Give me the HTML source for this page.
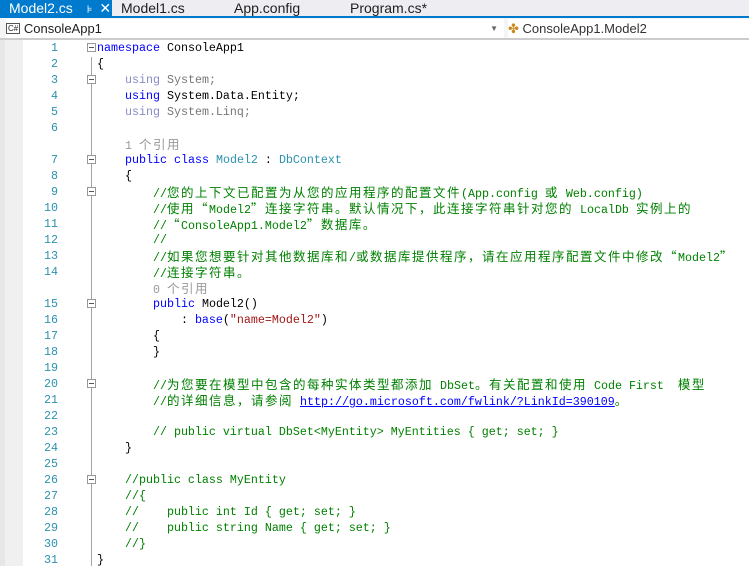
<!DOCTYPE html>
<html><head><meta charset="utf-8"><style>
*{margin:0;padding:0;box-sizing:border-box}
body{width:749px;height:566px;overflow:hidden;background:#fff;position:relative;font-family:"Liberation Sans","Noto Sans CJK SC",sans-serif}
.tabs{position:absolute;left:0;top:0;width:749px;height:17px;background:#eeeef2}
.tab{position:absolute;top:0;height:17px;font-size:14px;line-height:16px;color:#1e1e1e}
.act{left:0;width:112px;background:#007acc;color:#fff;padding-left:9px}
.uline{position:absolute;left:0;top:16px;width:749px;height:2px;background:#007acc}
.bar{position:absolute;left:0;top:18px;width:749px;height:22px;background:#f5f5f5;border-bottom:2px solid #ccc}
.dd{position:absolute;top:1px;height:19px;background:#fff;font-size:13px;line-height:19px;color:#1e1e1e}
.gut1{position:absolute;left:0;top:40px;width:5px;height:526px;background:#e6e7e8}
.gut2{position:absolute;left:5px;top:40px;width:18px;height:526px;background:#f0f0f0}
.code{position:absolute;left:0;top:40px;width:749px;font-family:"Liberation Mono","Noto Sans CJK SC",monospace;font-size:11.67px}
.r{height:16px;line-height:16px;white-space:pre;position:relative}
.n{position:absolute;left:0;width:58px;text-align:right;color:#2b91af}
.t{position:absolute;left:97px}
.c{font-family:"Noto Sans CJK SC",sans-serif;font-size:12.5px;letter-spacing:1.5px}
.k{color:#0000ff}.ty{color:#2b91af}.g{color:#008000}.s{color:#a31515}.d{color:#999}
.du{color:#8a8ac8}.dg{color:#777}
.fold{position:absolute;left:87px;width:9px;height:9px;border:1px solid #999;background:#fff}
.fold:after{content:"";position:absolute;left:1px;top:3px;width:5px;height:1px;background:#555}
.vl{position:absolute;left:91px;top:57px;width:1px;height:509px;background:#a5a5a5}
a{color:#0000ff;text-decoration:underline}
</style></head><body>
<div class="tabs">
<div class="tab act">Model2.cs <span style="margin-left:10px;font-size:11px">⊧</span> <span style="margin-left:3px">✕</span></div>
<div class="tab" style="left:121px">Model1.cs</div>
<div class="tab" style="left:234px">App.config</div>
<div class="tab" style="left:350px">Program.cs*</div>
</div>
<div class="uline"></div>
<div class="bar">
<div class="dd" style="left:6px;width:498px"><span style="display:inline-block;border:1px solid #555;font-size:8px;line-height:9px;padding:0 1px;vertical-align:2px">C#</span> ConsoleApp1<span style="position:absolute;right:6px;font-size:8px;color:#666">▼</span></div>
<div class="dd" style="left:508px;width:241px;color:#333"><span style="color:#c98a1a">✤</span> ConsoleApp1.Model2</div>
</div>
<div class="gut1"></div><div class="gut2"></div>
<div class="vl"></div>
<div class="code">
<div class="r"><span class="n">1</span><span class="fold" style="top:3px"></span><span class="t"><span class="k">namespace</span> ConsoleApp1</span></div>
<div class="r"><span class="n">2</span><span class="t">{</span></div>
<div class="r"><span class="n">3</span><span class="fold" style="top:3px"></span><span class="t">    <span class="du">using</span> <span class="dg">System;</span></span></div>
<div class="r"><span class="n">4</span><span class="t">    <span class="k">using</span> System.Data.Entity;</span></div>
<div class="r"><span class="n">5</span><span class="t">    <span class="du">using</span> <span class="dg">System.Linq;</span></span></div>
<div class="r"><span class="n">6</span><span class="t"></span></div>
<div class="r"><span class="t d">    1 <span class="c">个引用</span></span></div>
<div class="r"><span class="n">7</span><span class="fold" style="top:3px"></span><span class="t">    <span class="k">public</span> <span class="k">class</span> <span class="ty">Model2</span> : <span class="ty">DbContext</span></span></div>
<div class="r"><span class="n">8</span><span class="t">    {</span></div>
<div class="r"><span class="n">9</span><span class="fold" style="top:3px"></span><span class="t g">        //<span class="c">您的上下文已配置为从您的应用程序的配置文件</span>(App.config <span class="c">或</span> Web.config)</span></div>
<div class="r"><span class="n">10</span><span class="t g">        //<span class="c">使用“</span>Model2<span class="c">”连接字符串。默认情况下，此连接字符串针对您的</span> LocalDb <span class="c">实例上的</span></span></div>
<div class="r"><span class="n">11</span><span class="t g">        //<span class="c">“</span>ConsoleApp1.Model2<span class="c">”数据库。</span></span></div>
<div class="r"><span class="n">12</span><span class="t g">        //</span></div>
<div class="r"><span class="n">13</span><span class="t g">        //<span class="c">如果您想要针对其他数据库和</span>/<span class="c">或数据库提供程序，请在应用程序配置文件中修改“</span>Model2<span class="c">”</span></span></div>
<div class="r"><span class="n">14</span><span class="t g">        //<span class="c">连接字符串。</span></span></div>
<div class="r"><span class="t d">        0 <span class="c">个引用</span></span></div>
<div class="r"><span class="n">15</span><span class="fold" style="top:3px"></span><span class="t">        <span class="k">public</span> Model2()</span></div>
<div class="r"><span class="n">16</span><span class="t">            : <span class="k">base</span>(<span class="s">"name=Model2"</span>)</span></div>
<div class="r"><span class="n">17</span><span class="t">        {</span></div>
<div class="r"><span class="n">18</span><span class="t">        }</span></div>
<div class="r"><span class="n">19</span><span class="t"></span></div>
<div class="r"><span class="n">20</span><span class="fold" style="top:3px"></span><span class="t g">        //<span class="c">为您要在模型中包含的每种实体类型都添加</span> DbSet<span class="c">。有关配置和使用</span> Code First  <span class="c">模型</span></span></div>
<div class="r"><span class="n">21</span><span class="t g">        //<span class="c">的详细信息，请参阅</span> <a>http://go.microsoft.com/fwlink/?LinkId=390109</a><span class="c">。</span></span></div>
<div class="r"><span class="n">22</span><span class="t"></span></div>
<div class="r"><span class="n">23</span><span class="t g">        // public virtual DbSet&lt;MyEntity&gt; MyEntities { get; set; }</span></div>
<div class="r"><span class="n">24</span><span class="t">    }</span></div>
<div class="r"><span class="n">25</span><span class="t"></span></div>
<div class="r"><span class="n">26</span><span class="fold" style="top:3px"></span><span class="t g">    //public class MyEntity</span></div>
<div class="r"><span class="n">27</span><span class="t g">    //{</span></div>
<div class="r"><span class="n">28</span><span class="t g">    //    public int Id { get; set; }</span></div>
<div class="r"><span class="n">29</span><span class="t g">    //    public string Name { get; set; }</span></div>
<div class="r"><span class="n">30</span><span class="t g">    //}</span></div>
<div class="r"><span class="n">31</span><span class="t">}</span></div>
</div>
</body></html>
